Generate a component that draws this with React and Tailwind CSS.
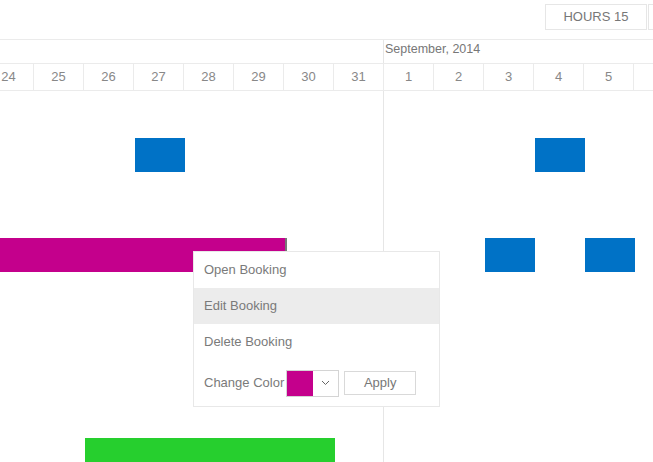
import React from 'react';

const days = [24, 25, 26, 27, 28, 29, 30, 31, 1, 2, 3, 4, 5];

// bookings placed by day index (0 = Aug 24), span in days
const rows = [
  [
    { start: 3, span: 1, color: 'bg-[#0072c6]' },
    { start: 11, span: 1, color: 'bg-[#0072c6]' },
  ],
  [
    { start: -3, span: 9, color: 'bg-[#c4008c]', handle: true },
    { start: 10, span: 1, color: 'bg-[#0072c6]' },
    { start: 12, span: 1, color: 'bg-[#0072c6]' },
  ],
  [],
  [{ start: 2, span: 5, color: 'bg-[#26cf2e]' }],
];

const font = { fontFamily: '"Liberation Sans", Arial, sans-serif' };

const App = () => {
  return (
    <div className="relative w-[653px] h-[462px] overflow-hidden bg-white text-[#7a7a7a]" style={font}>
      {/* Toolbar */}
      <div className="h-[40px] border-b border-[#ebebeb] flex items-start pt-[4px] pl-[545px] gap-[1px]">
        <button className="shrink-0 w-[102px] h-[26px] border border-[#e6e6e6] text-[13px] text-[#777] bg-white">HOURS 15</button>
        <button className="shrink-0 w-[90px] h-[26px] border border-[#e6e6e6] bg-white" />
      </div>

      {/* Month row */}
      <div className="flex h-[24px] border-b border-[#ebebeb] ml-[-16px]">
        <div className="w-[399px] shrink-0" />
        <div className="flex-1 border-l border-[#e6e6e6] pl-[1px] text-[12.5px] leading-[17px] pt-[1px] text-[#777]">September, 2014</div>
      </div>

      {/* Day row */}
      <div className="flex h-[27px] border-b border-[#ebebeb] ml-[-16px]">
        {days.map((d, i) => (
          <div
            key={i}
            className="w-[50px] shrink-0 border-r border-[#ebebeb] flex items-center justify-center text-[13px] text-[#888]"
          >
            {d}
          </div>
        ))}
      </div>

      {/* Body */}
      <div className="relative flex flex-col pt-[14px]">
        {/* month boundary line */}
        <div className="absolute top-0 bottom-[-200px] left-[383px] w-px bg-[#e6e6e6]" />
        {rows.map((bars, r) => (
          <div key={r} className="relative h-[100px]">
            {bars.map((b, j) => (
              <div
                key={j}
                className={`absolute top-[33px] h-[34px] ${b.color} ${b.handle ? 'border-r-2 border-[#777]' : ''}`}
                style={{ left: 135 + (b.start - 3) * 50, width: b.span * 50 + (b.handle ? 2 : 0) }}
              />
            ))}
          </div>
        ))}
      </div>

      {/* Context menu */}
      <div className="absolute left-[193px] top-[251px] w-[247px] bg-white border border-[#e8e8e8] text-[13px] text-[#7a7a7a]">
        <div className="h-[36px] flex items-center pl-[10px]">Open Booking</div>
        <div className="h-[36px] flex items-center pl-[10px] bg-[#ececec]">Edit Booking</div>
        <div className="h-[36px] flex items-center pl-[10px]">Delete Booking</div>
        <div className="h-[46px] flex items-center pl-[10px]">
          <span>Change Color</span>
          <div className="ml-[2px] w-[53px] h-[27px] border border-[#d4d4d4] flex items-stretch">
            <div className="w-[26px] bg-[#c4008c]" />
            <div className="flex-1 flex items-center justify-center">
              <svg width="9" height="6" viewBox="0 0 9 6" fill="none">
                <polyline points="1,1 4.5,4.5 8,1" stroke="#666" strokeWidth="1" />
              </svg>
            </div>
          </div>
          <button className="ml-[5px] w-[72px] h-[24px] border border-[#d9d9d9] bg-white text-[13px] text-[#777]">Apply</button>
        </div>
      </div>
    </div>
  );
};

export default App;
